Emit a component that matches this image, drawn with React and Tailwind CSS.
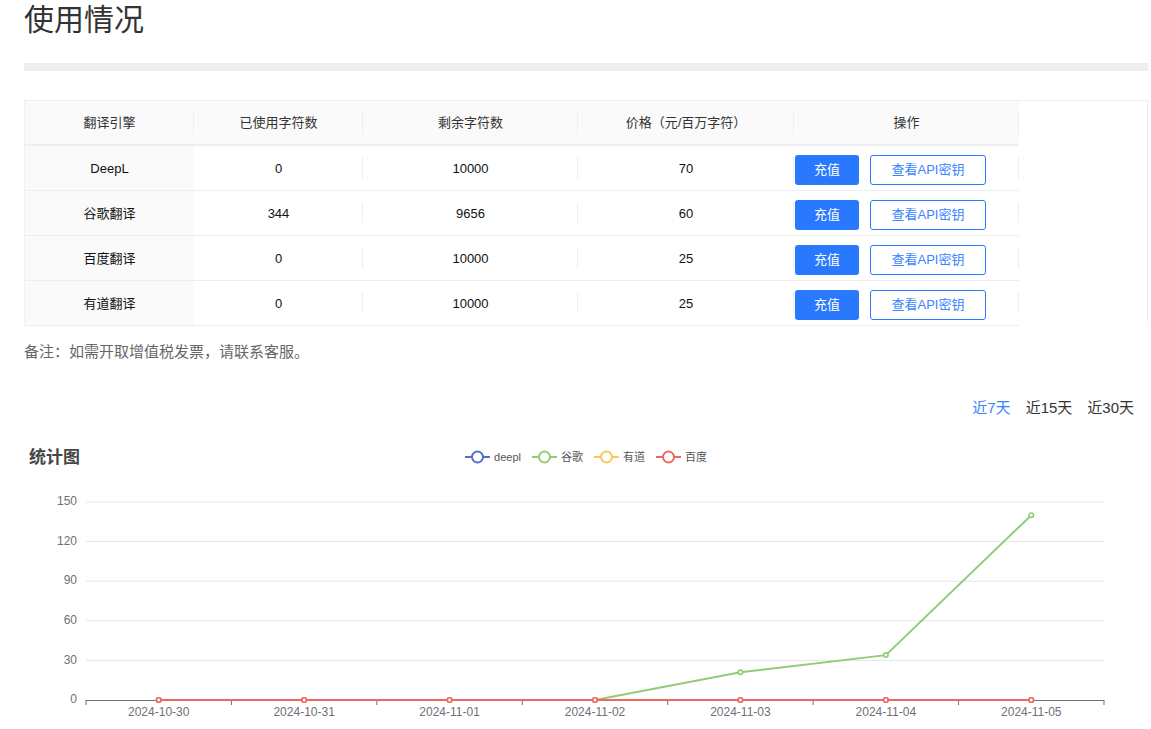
import React from "react";

const rows = [
  { name: "DeepL", used: "0", left: "10000", price: "70" },
  { name: "谷歌翻译", used: "344", left: "9656", price: "60" },
  { name: "百度翻译", used: "0", left: "10000", price: "25" },
  { name: "有道翻译", used: "0", left: "10000", price: "25" },
];

const cols = ["w-[169px]", "w-[169px]", "w-[215px]", "w-[216px]", "w-[225px]"];

function Divider() {
  return <span className="absolute right-0 top-1/2 -translate-y-1/2 h-[21px] w-px bg-[#eeeeee]" />;
}

function LegendIcon({ color }) {
  return (
    <svg width="25" height="14" viewBox="0 0 25 14">
      <line x1="0" y1="7" x2="25" y2="7" stroke={color} strokeWidth="2" />
      <circle cx="12.5" cy="7" r="5.5" fill="#fff" stroke={color} strokeWidth="2" />
    </svg>
  );
}

const legend = [
  { label: "deepl", color: "#5470c6" },
  { label: "谷歌", color: "#91cc75" },
  { label: "有道", color: "#fac858" },
  { label: "百度", color: "#ee6666" },
];

const dates = ["2024-10-30", "2024-10-31", "2024-11-01", "2024-11-02", "2024-11-03", "2024-11-04", "2024-11-05"];
const series = [
  { color: "#5470c6", data: [0, 0, 0, 0, 0, 0, 0] },
  { color: "#91cc75", data: [0, 0, 0, 0, 21, 34, 140] },
  { color: "#fac858", data: [0, 0, 0, 0, 0, 0, 0] },
  { color: "#ee6666", data: [0, 0, 0, 0, 0, 0, 0] },
];

function Chart() {
  const x0 = 86, x1 = 1104, y0 = 700, h = 198;
  const band = (x1 - x0) / 7;
  const xs = dates.map((_, i) => x0 + (i + 0.5) * band);
  const yv = (v) => y0 - (v / 150) * h;
  return (
    <svg width="1124" height="260" viewBox="24 469 1124 260" className="block">
      {[30, 60, 90, 120, 150].map((v) => (
        <line key={v} x1={x0} x2={x1} y1={yv(v)} y2={yv(v)} stroke="#e0e6f1" strokeWidth="1" />
      ))}
      {[0, 30, 60, 90, 120, 150].map((v) => (
        <text key={v} x="77" y={yv(v)} textAnchor="end" dominantBaseline="middle" fontSize="12" fill="#6e7079" fontFamily="Liberation Sans, Noto Sans CJK SC, sans-serif">{v}</text>
      ))}
      <line x1={x0} x2={x1} y1={y0 + 0.5} y2={y0 + 0.5} stroke="#6e7079" strokeWidth="1" />
      {Array.from({ length: 8 }).map((_, i) => (
        <line key={i} x1={x0 + i * band} x2={x0 + i * band} y1={y0} y2={y0 + 5} stroke="#6e7079" strokeWidth="1" />
      ))}
      {dates.map((d, i) => (
        <text key={d} x={xs[i]} y="713" textAnchor="middle" dominantBaseline="middle" fontSize="12" fill="#6e7079" fontFamily="Liberation Sans, Noto Sans CJK SC, sans-serif">{d}</text>
      ))}
      {series.map((s, si) => (
        <g key={si}>
          <polyline fill="none" stroke={s.color} strokeWidth="2" strokeLinejoin="round" points={s.data.map((v, i) => `${xs[i]},${yv(v)}`).join(" ")} />
          {s.data.map((v, i) => (
            <circle key={i} cx={xs[i]} cy={yv(v)} r="2.2" fill="#fff" stroke={s.color} strokeWidth="1.6" />
          ))}
        </g>
      ))}
    </svg>
  );
}

export default function App() {
  return (
    <div className="bg-white min-h-[729px] pl-6 pr-[3px] font-['Liberation_Sans','Noto_Sans_CJK_SC',sans-serif]">
      <h1 className="h-[40px] leading-[40px] text-[30px] font-normal text-[#333333]">使用情况</h1>
      <div className="mt-[23px] h-[8px] bg-[#eeeeee]" />

      <div className="mt-[29px] flex border-t border-l border-r border-[#f0f0f0]">
        <div className="flex flex-col">
          <div className="flex h-[45px] bg-[#fafafa] border-b-2 border-[#eeeeee] text-[13px] text-[#333333]">
            {["翻译引擎", "已使用字符数", "剩余字符数", "价格（元/百万字符）", "操作"].map((t, i) => (
              <div key={t} className={`${cols[i]} relative flex items-center justify-center`}>
                {t}
                <Divider />
              </div>
            ))}
          </div>
          {rows.map((r) => (
            <div key={r.name} className="flex h-[45px] border-b border-[#eeeeee] text-[13px] text-[#111111]">
              <div className={`${cols[0]} bg-[#fafafa] flex items-center justify-center pt-[1px]`}>{r.name}</div>
              <div className={`${cols[1]} relative flex items-center justify-center pt-[1px]`}>{r.used}<Divider /></div>
              <div className={`${cols[2]} relative flex items-center justify-center pt-[1px]`}>{r.left}<Divider /></div>
              <div className={`${cols[3]} relative flex items-center justify-center pt-[1px]`}>{r.price}<Divider /></div>
              <div className={`${cols[4]} relative flex items-center pl-[1px] pt-[3px] gap-[11px]`}>
                <button className="w-[64px] h-[30px] rounded-[3px] bg-[#2979ff] text-white text-[13px]">充值</button>
                <button className="w-[116px] h-[30px] rounded-[3px] border border-[#2979ff] bg-white text-[#3a84ff] text-[13px]">查看API密钥</button>
                <Divider />
              </div>
            </div>
          ))}
        </div>
        <div className="flex-1" />
      </div>

      <p className="mt-[16px] h-[20px] leading-[20px] text-[15px] text-[#666666]">备注：如需开取增值税发票，请联系客服。</p>

      <div className="mt-[36px] flex justify-end gap-[15px] pr-[14px] h-[20px] leading-[20px] text-[15px]">
        <span className="text-[#3a84ff]">近7天</span>
        <span className="text-[#333333]">近15天</span>
        <span className="text-[#333333]">近30天</span>
      </div>

      <div className="mt-[27px] grid grid-cols-[1fr_auto_1fr] items-center h-[24px]">
        <div className="pl-[5px] text-[17px] font-bold text-[#464646]">统计图</div>
        <div className="flex items-center gap-[11px] text-[11px] text-[#555555] pt-[-1px] -mt-[2px]">
          {legend.map((l) => (
            <div key={l.label} className="flex items-center gap-[4px]">
              <LegendIcon color={l.color} />
              <span>{l.label}</span>
            </div>
          ))}
        </div>
        <div />
      </div>

      <Chart />
    </div>
  );
}
